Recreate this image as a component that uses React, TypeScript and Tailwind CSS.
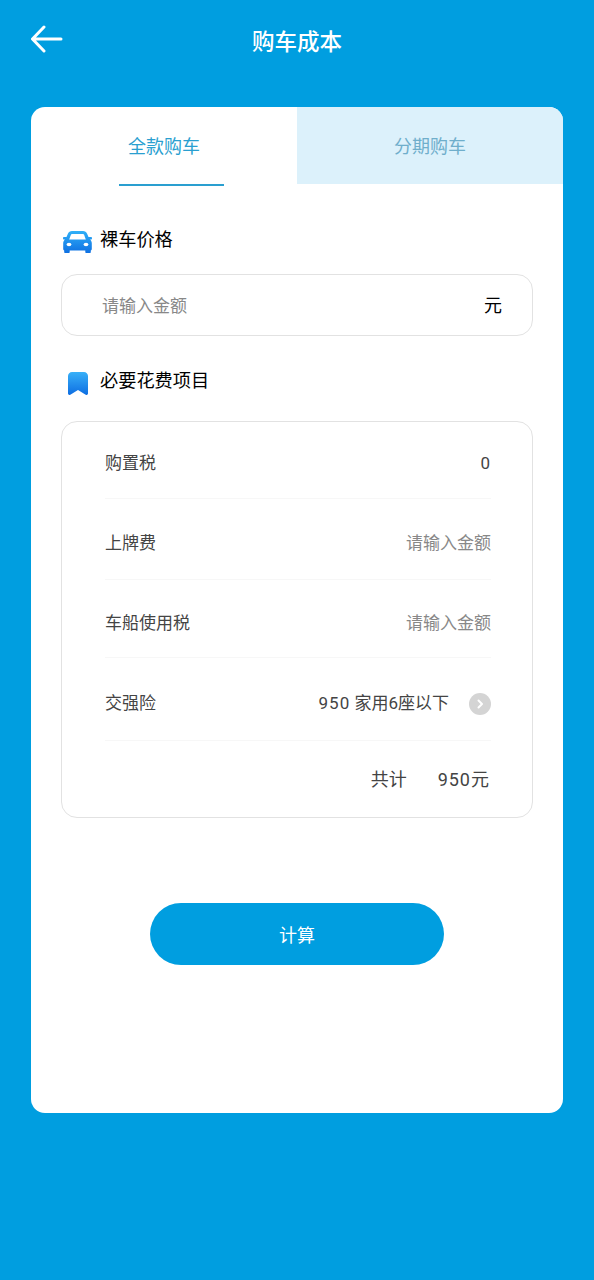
const cjk = { fontFamily: '"Roboto", "Noto Sans CJK SC", sans-serif' }

function CarIcon() {
  return (
    <svg width="29" height="22" viewBox="0 0 29 22">
      <defs>
        <linearGradient id="car" x1="0" y1="0" x2="0" y2="1">
          <stop offset="0" stopColor="#2fb0f8" />
          <stop offset="1" stopColor="#0f70e2" />
        </linearGradient>
      </defs>
      <path
        d="M9 0h11c2 0 3.300 1 4 2.500L25.500 6H28c.6 0 1 .5 1 1.200s-.4 1.300-1 1.300h-1c1.200 1 1.800 2.200 1.800 3.800V18c0 .8-.4 1.300-1 1.500V21c0 .6-.4 1-1 1h-3.500c-.6 0-1-.4-1-1v-1.500H6.700V21c0 .6-.4 1-1 1H2.200c-.6 0-1-.4-1-1v-1.500c-.6-.2-1-.7-1-1.500v-5.700c0-1.600.6-2.800 1.800-3.800H1c-.6 0-1-.6-1-1.300S.4 6 1 6h2.500L5 2.500C5.700 1 7 0 9 0z"
        fill="url(#car)"
      />
      <path d="M9 3h11c.5 0 .9.3 1.100.7L22.800 8.500H6.200l1.700-4.800C8.100 3.300 8.500 3 9 3z" fill="#ffffff" />
      <ellipse cx="6" cy="13.500" rx="2.400" ry="1.800" fill="#ffffff" />
      <ellipse cx="23" cy="13.500" rx="2.400" ry="1.800" fill="#ffffff" />
    </svg>
  )
}

function BookmarkIcon() {
  return (
    <svg width="20" height="23" viewBox="0 0 20 23">
      <defs>
        <linearGradient id="mark" x1="0" y1="0" x2="0" y2="1">
          <stop offset="0" stopColor="#38b0f8" />
          <stop offset="1" stopColor="#0e6ee2" />
        </linearGradient>
      </defs>
      <path d="M4 0h12c2.200 0 4 1.800 4 4v17.500c0 1.200-1.300 1.900-2.300 1.200L10 18l-7.700 4.700C1.300 23.400 0 22.700 0 21.500V4c0-2.200 1.800-4 4-4z" fill="url(#mark)" />
    </svg>
  )
}

function Row({ label, value, muted, h, pt }: { label: string; value: React.ReactNode; muted?: boolean; h: string; pt: string }) {
  return (
    <div className={`flex items-center justify-between border-b border-[#f7f7f7] ${h} ${pt}`}>
      <span className="text-[17px] text-[#444]">{label}</span>
      <span className={`text-[17px] ${muted ? 'text-[#888]' : 'text-[#444]'}`}>{value}</span>
    </div>
  )
}

export default function App() {
  return (
    <div className="min-h-[1280px] bg-[#009ee0] px-[31px] pt-[19px]" style={cjk}>
      {/* Cabecera */}
      <div className="relative flex h-[44px] items-center justify-center">
        <svg className="absolute left-0 top-[6px]" width="32" height="28" viewBox="0 0 32 28" fill="none" stroke="#fff" strokeWidth="3" strokeLinecap="round" strokeLinejoin="round">
          <path d="M30 14H2M13 2 1.500 14 13 26" />
        </svg>
        <h1 className="pt-[4px] text-[22.500px] font-medium text-white">购车成本</h1>
      </div>

      <div className="mt-[44px] h-[1006px] overflow-hidden rounded-[14px] bg-white">
        {/* Tabs */}
        <div className="flex h-[79px]">
          <div className="flex w-1/2 flex-col items-center">
            <span className="mt-[27px] text-[18px] leading-[26px] text-[#2a9fd0]">全款购车</span>
            <div className="ml-[15px] mt-[24px] h-[2px] w-[105px] shrink-0 bg-[#2a9fd0]" />
          </div>
          <div className="flex h-[77px] w-1/2 justify-center bg-[#dcf1fb]">
            <span className="mt-[27px] text-[18px] leading-[26px] text-[#6faecb]">分期购车</span>
          </div>
        </div>

        <div className="px-[30px]">
          <div className="mt-[32px] flex h-[44px] items-center">
            <span className="ml-[2px] mt-[4px] flex"><CarIcon /></span>
            <span className="ml-[8px] text-[18.200px] text-black">裸车价格</span>
          </div>

          <div className="mt-[12px] flex h-[62px] items-center justify-between rounded-[16px] border border-[#e2e2e2] pl-[40px] pr-[30px]">
            <span className="pt-[4px] text-[17px] text-[#888]">请输入金额</span>
            <span className="text-[18px] text-black">元</span>
          </div>

          <div className="mt-[23px] flex h-[44px] items-center">
            <span className="ml-[7px] mt-[4px] flex"><BookmarkIcon /></span>
            <span className="ml-[12px] text-[18.200px] text-black">必要花费项目</span>
          </div>

          <div className="mt-[18px] h-[397px] rounded-[16px] border border-[#e2e2e2] pl-[43px] pr-[41px]">
            <Row h="h-[77px]" pt="pt-[8px]" label="购置税" value={<span className="tracking-[1px]">0</span>} />
            <Row h="h-[81px]" pt="pt-[10px]" label="上牌费" value="请输入金额" muted />
            <Row h="h-[78px]" pt="pt-[10px]" label="车船使用税" value="请输入金额" muted />
            <div className="flex h-[83px] items-center justify-between border-b border-[#f7f7f7] pt-[10px]">
              <span className="text-[17px] text-[#444]">交强险</span>
              <div className="flex items-center gap-[20px]">
                <span className="text-[17px] text-[#444]"><span className="tracking-[1px]">950</span> 家用6座以下</span>
                <span className="flex h-[22px] w-[22px] items-center justify-center rounded-full bg-[#d4d4d4]">
                  <svg width="10" height="10" viewBox="0 0 10 10" fill="none" stroke="#fff" strokeWidth="2" strokeLinecap="round" strokeLinejoin="round">
                    <path d="M3.500 1.500 7 5 3.500 8.500" />
                  </svg>
                </span>
              </div>
            </div>
            <div className="flex h-[76px] items-center justify-end gap-[31px] pr-[2px] text-[18px] text-[#444]">
              <span>共计</span>
              <span><span className="tracking-[1px]">950</span>元</span>
            </div>
          </div>

          <button className="mx-auto mt-[85px] block h-[62px] w-[294px] rounded-full bg-[#009ee0] pt-[2px] text-[18px] text-white">
            计算
          </button>
        </div>
      </div>
    </div>
  )
}
